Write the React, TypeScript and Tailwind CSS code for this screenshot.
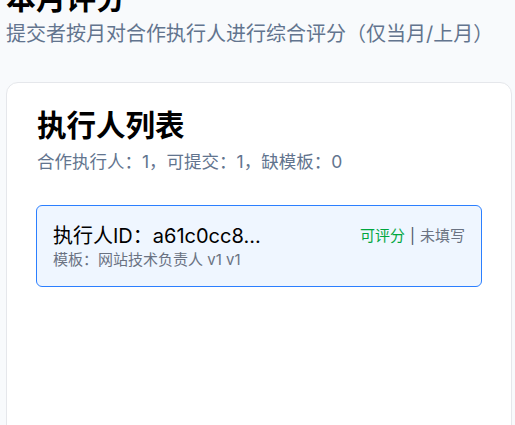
export default function App() {
  const executors = [
    { id: 'a61c0cc8...', template: '网站技术负责人 v1 v1', canScore: true, filled: false },
  ];

  return (
    <div
      className="min-h-[425px] overflow-hidden bg-slate-50 pl-[6px] pr-[3px]"
      style={{ fontFamily: 'Inter, "Noto Sans CJK SC", sans-serif' }}
    >
      <h1 className="-mt-[20px] text-[30px] font-bold leading-[36px] text-black">本月评分</h1>
      <p className="mt-[4px] text-[20px] leading-[28px] text-slate-500">
        提交者按月对合作执行人进行综合评分（仅当月/上月）
      </p>

      <div className="mt-[34px] min-h-[400px] rounded-xl border border-gray-200 bg-white px-[29px] pt-[24px]">
        <h2 className="pl-px text-[29.5px] font-bold leading-[36px] text-black">执行人列表</h2>
        <p className="mt-[7px] pl-px text-[17.5px] leading-[24px] text-slate-500">
          合作执行人：1，可提交：1，缺模板：0
        </p>

        <div className="mt-[31px] flex flex-col gap-3">
          {executors.map((e) => (
            <div key={e.id} className="rounded-md border border-blue-500 bg-blue-50 p-4">
              <div className="flex items-center justify-between">
                <div className="text-[20px] leading-[28px] text-black">执行人ID：{e.id}</div>
                <div className="flex items-center text-[15px] leading-[20px]">
                  <span className="text-green-600">{e.canScore ? '可评分' : '不可评分'}</span>
                  <span className="mx-[5px] text-gray-600">|</span>
                  <span className="text-gray-500">{e.filled ? '已填写' : '未填写'}</span>
                </div>
              </div>
              <div className="text-[15px] leading-[20px] text-gray-500">模板：{e.template}</div>
            </div>
          ))}
        </div>
      </div>
    </div>
  );
}
